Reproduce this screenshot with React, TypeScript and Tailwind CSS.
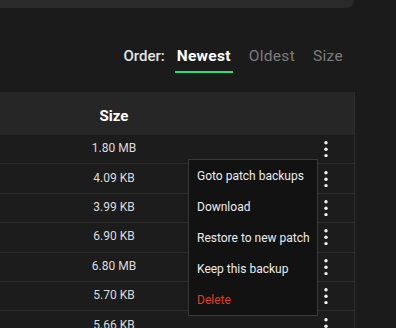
const sizes = ['1.80 MB', '4.09 KB', '3.99 KB', '6.90 KB', '6.80 MB', '5.70 KB', '5.66 KB'];

const menuItems = ['Goto patch backups', 'Download', 'Restore to new patch', 'Keep this backup'];

function Kebab() {
  return (
    <svg width="4" height="16" viewBox="0 0 4 16" className="block">
      <circle cx="2" cy="1.8" r="1.7" fill="#f2f2f2" />
      <circle cx="2" cy="8.2" r="1.7" fill="#f2f2f2" />
      <circle cx="2" cy="14.6" r="1.7" fill="#f2f2f2" />
    </svg>
  );
}

export default function App() {
  return (
    <div
      className="relative flex w-[396px] h-[328px] overflow-hidden bg-[#1b1b1b]"
      style={{ fontFamily: 'Roboto, "Noto Sans", sans-serif' }}
    >
      <div className="flex flex-col w-[355px] shrink-0 overflow-hidden bg-[#1c1c1c]">
        {/* top card edge */}
        <div className="h-[8px] w-[354px] shrink-0 bg-[#2a2a2a] rounded-br-[10px]" />

        {/* order tabs */}
        <div className="h-[84px] shrink-0 flex items-start justify-end pr-[10px] pt-[38px] bg-[#1b1b1b]">
          <span className="text-[15px] font-medium text-[#e4e4e4] leading-[20px] mr-[10px] ml-[2px]">Order:</span>
          <div className="flex gap-[14px]">
            <div className="flex flex-col items-center">
              <span className="px-[2px] text-[15.5px] font-bold text-white leading-[20px] tracking-[0.3px]">Newest</span>
              <div className="mt-[5px] h-[2px] w-full bg-[#22e27c]" />
            </div>
            <span className="px-[2px] text-[15.5px] text-[#7b7b7b] leading-[20px] tracking-[0.3px]">Oldest</span>
            <span className="px-[2px] text-[15.5px] text-[#7b7b7b] leading-[20px] tracking-[0.3px]">Size</span>
          </div>
        </div>

        {/* table */}
        <div className="flex-1 shrink-0 border-r border-[#2d2d2d]">
          <div className="h-[43px] flex items-center pt-[5px] bg-[#262626]">
            <div className="w-[54px]" />
            <div className="w-[120px] text-center text-[15px] font-bold text-white">Size</div>
          </div>
          {sizes.map((s) => (
            <div key={s} className="h-[29.4px] shrink-0 flex items-center border-b border-[#2b2b2b]">
              <div className="w-[54px]" />
              <div className="w-[120px] text-center text-[12px] text-[#dcdcdc] pb-[2px]">{s}</div>
              <div className="flex-1 flex justify-end pr-[26px]">
                <Kebab />
              </div>
            </div>
          ))}
        </div>
      </div>

      {/* dropdown menu */}
      <div className="absolute left-[188px] top-[159px] w-[130px] bg-[#121212] border border-[#3a3a3a]">
        {menuItems.map((m) => (
          <div key={m} className="h-[31px] flex items-center pl-[8px] text-[12px] text-[#ececec]">
            {m}
          </div>
        ))}
        <div className="h-[31px] flex items-center pl-[8px] text-[12px] text-[#e0401f]">Delete</div>
      </div>
    </div>
  );
}
